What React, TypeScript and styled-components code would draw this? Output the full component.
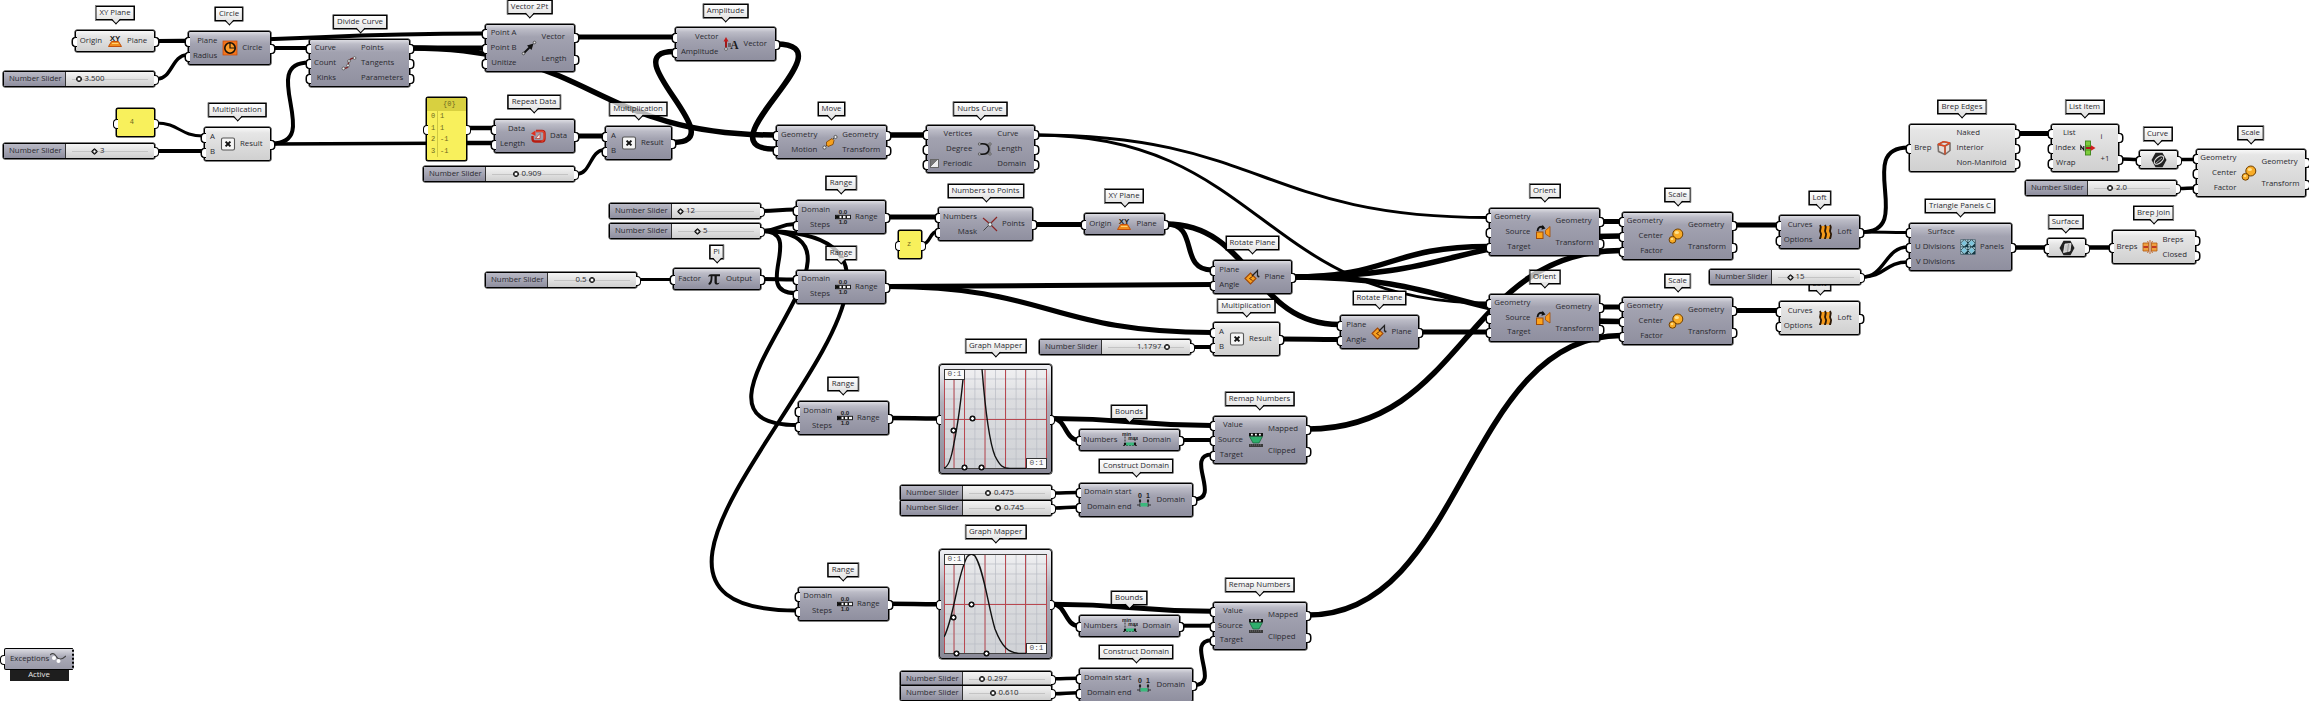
import React from 'react';
import styled, { createGlobalStyle } from 'styled-components';

interface NodeData {
  x: number;
  y: number;
  w: number;
  h: number;
  icon: string;
  split: number;
  ins: string[];
  outs: string[];
  light?: boolean;
}

interface TagData {
  x: number;
  y: number;
  text: string;
  ghost?: boolean;
}

interface SliderData {
  x: number;
  y: number;
  knob: number;
  value: string;
  whole?: boolean;
  flip?: boolean;
}

interface WireData {
  from: [number, number];
  to: [number, number];
  w: number;
  bend?: number;
}

const GROUP = 185.7;

// split is the distance from the left side of the node to the end of its input names
const nodes: NodeData[] = [
  { x: 75, y: 30, w: 80, h: 22, icon: 'xy', split: 27, ins: ['Origin'], outs: ['Plane'], light: true },
  { x: 188, y: 31, w: 83, h: 34, icon: 'circle', split: 29.3, ins: ['Plane', 'Radius'], outs: ['Circle'] },
  { x: 204, y: 127, w: 67, h: 34, icon: 'times', split: 11, ins: ['A', 'B'], outs: ['Result'], light: true },
  { x: 309, y: 39, w: 101, h: 48, icon: 'divide', split: 27, ins: ['Curve', 'Count', 'Kinks'], outs: ['Points', 'Tangents', 'Parameters'] },
  { x: 485, y: 24, w: 90, h: 48, icon: 'vector', split: 31.5, ins: ['Point A', 'Point B', 'Unitize'], outs: ['Vector', 'Length'] },
  { x: 494, y: 119, w: 81, h: 34, icon: 'repeat', split: 31, ins: ['Data', 'Length'], outs: ['Data'] },
  { x: 605, y: 126, w: 67, h: 34, icon: 'times', split: 11, ins: ['A', 'B'], outs: ['Result'] },
  { x: 675, y: 27, w: 101, h: 34, icon: 'amplitude', split: 43.5, ins: ['Vector', 'Amplitude'], outs: ['Vector'] },
  { x: 776, y: 125, w: 111, h: 34, icon: 'move', split: 41.3, ins: ['Geometry', 'Motion'], outs: ['Geometry', 'Transform'] },
  { x: 926, y: 125, w: 109, h: 48, icon: 'nurbs', split: 46.3, ins: ['Vertices', 'Degree', 'Periodic'], outs: ['Curve', 'Length', 'Domain'] },
  { x: 796, y: 200, w: 90, h: 34, icon: 'range', split: 34, ins: ['Domain', 'Steps'], outs: ['Range'] },
  { x: 796, y: 269.5, w: 90, h: 34, icon: 'range', split: 34, ins: ['Domain', 'Steps'], outs: ['Range'] },
  { x: 938, y: 207, w: 95, h: 34, icon: 'points', split: 39, ins: ['Numbers', 'Mask'], outs: ['Points'] },
  { x: 673, y: 268, w: 88, h: 22, icon: 'pi', split: 28, ins: ['Factor'], outs: ['Output'] },
  { x: 1084, y: 213, w: 81, h: 22, icon: 'xy', split: 27.5, ins: ['Origin'], outs: ['Plane'] },
  { x: 1213, y: 260, w: 79, h: 34, icon: 'rotate', split: 26.5, ins: ['Plane', 'Angle'], outs: ['Plane'] },
  { x: 1213, y: 322, w: 67, h: 34, icon: 'times', split: 11, ins: ['A', 'B'], outs: ['Result'], light: true },
  { x: 1340, y: 315, w: 79, h: 34, icon: 'rotate', split: 26.5, ins: ['Plane', 'Angle'], outs: ['Plane'] },
  { x: 1489, y: 208, w: 111, h: 48, icon: 'orient', split: 41.5, ins: ['Geometry', 'Source', 'Target'], outs: ['Geometry', 'Transform'] },
  { x: 1489, y: 293.5, w: 111, h: 48, icon: 'orient', split: 41.5, ins: ['Geometry', 'Source', 'Target'], outs: ['Geometry', 'Transform'] },
  { x: 1622, y: 212, w: 111, h: 48, icon: 'scale', split: 41, ins: ['Geometry', 'Center', 'Factor'], outs: ['Geometry', 'Transform'] },
  { x: 1622, y: 297, w: 111, h: 48, icon: 'scale', split: 41, ins: ['Geometry', 'Center', 'Factor'], outs: ['Geometry', 'Transform'] },
  { x: 1779, y: 215, w: 81, h: 34, icon: 'loft', split: 33.5, ins: ['Curves', 'Options'], outs: ['Loft'] },
  { x: 1779, y: 301, w: 81, h: 34, icon: 'loft', split: 33.5, ins: ['Curves', 'Options'], outs: ['Loft'], light: true },
  { x: 1909, y: 124, w: 107, h: 48, icon: 'edges', split: 22.5, ins: ['Brep'], outs: ['Naked', 'Interior', 'Non-Manifold'], light: true },
  { x: 2051, y: 124, w: 68, h: 48, icon: 'item', split: 24.5, ins: ['List', 'Index', 'Wrap'], outs: ['i', '+1'], light: true },
  { x: 2196, y: 149, w: 110, h: 48, icon: 'scale', split: 40.5, ins: ['Geometry', 'Center', 'Factor'], outs: ['Geometry', 'Transform'], light: true },
  { x: 1909, y: 223, w: 103, h: 48, icon: 'panels', split: 46, ins: ['Surface', 'U Divisions', 'V Divisions'], outs: ['Panels'] },
  { x: 2112, y: 230, w: 84, h: 34, icon: 'join', split: 25.5, ins: ['Breps'], outs: ['Breps', 'Closed'], light: true },
];

const mapperNodes: NodeData[] = [
  { x: 798, y: 401, w: 91, h: 34, icon: 'range', split: 34, ins: ['Domain', 'Steps'], outs: ['Range'] },
  { x: 1079, y: 429, w: 101, h: 22, icon: 'bounds', split: 38.5, ins: ['Numbers'], outs: ['Domain'] },
  { x: 1079, y: 482.5, w: 114, h: 34, icon: 'domain', split: 52.5, ins: ['Domain start', 'Domain end'], outs: ['Domain'] },
  { x: 1213, y: 416, w: 94, h: 48, icon: 'remap', split: 30, ins: ['Value', 'Source', 'Target'], outs: ['Mapped', 'Clipped'] },
];

const tags: TagData[] = [
  { x: 115, y: 6, text: 'XY Plane' },
  { x: 229, y: 7, text: 'Circle' },
  { x: 237, y: 103, text: 'Multiplication' },
  { x: 360, y: 15, text: 'Divide Curve' },
  { x: 529.5, y: 0, text: 'Vector 2Pt' },
  { x: 534, y: 95, text: 'Repeat Data' },
  { x: 638, y: 102, text: 'Multiplication', ghost: true },
  { x: 725.5, y: 4, text: 'Amplitude' },
  { x: 831.5, y: 102, text: 'Move' },
  { x: 980, y: 102, text: 'Nurbs Curve' },
  { x: 841, y: 176, text: 'Range' },
  { x: 841, y: 246, text: 'Range', ghost: true },
  { x: 985.5, y: 184, text: 'Numbers to Points' },
  { x: 716.5, y: 245, text: 'Pi' },
  { x: 1124, y: 189, text: 'XY Plane' },
  { x: 1252.5, y: 236, text: 'Rotate Plane' },
  { x: 1246, y: 299, text: 'Multiplication' },
  { x: 1379.5, y: 291, text: 'Rotate Plane' },
  { x: 1544.5, y: 184, text: 'Orient' },
  { x: 1544.5, y: 270, text: 'Orient', ghost: true },
  { x: 1677.5, y: 188, text: 'Scale' },
  { x: 1677.5, y: 274, text: 'Scale' },
  { x: 1819.5, y: 191, text: 'Loft' },
  { x: 1819.5, y: 277, text: 'Loft' },
  { x: 1962, y: 100, text: 'Brep Edges' },
  { x: 2084.5, y: 100, text: 'List Item' },
  { x: 2157.5, y: 127, text: 'Curve' },
  { x: 2250.5, y: 126, text: 'Scale' },
  { x: 1960, y: 199, text: 'Triangle Panels C' },
  { x: 2065.5, y: 215, text: 'Surface' },
  { x: 2153.5, y: 206, text: 'Brep Join' },
];

const mapperTags: TagData[] = [
  { x: 843, y: 377, text: 'Range' },
  { x: 995.5, y: 339, text: 'Graph Mapper' },
  { x: 1129, y: 405, text: 'Bounds' },
  { x: 1136, y: 459, text: 'Construct Domain' },
  { x: 1259.5, y: 392, text: 'Remap Numbers' },
];

const sliders: SliderData[] = [
  { x: 3, y: 71, knob: 9.5, value: '3.500' },
  { x: 3, y: 143, knob: 26, value: '3', whole: true },
  { x: 423, y: 166, knob: 26.5, value: '0.909' },
  { x: 609, y: 203, knob: 6, value: '12', whole: true },
  { x: 609, y: 223, knob: 23, value: '5', whole: true },
  { x: 485, y: 272, knob: 27.5, value: '0.5', flip: true },
  { x: 1039, y: 339, knob: 35, value: '1.1797', flip: true },
  { x: 1709, y: 269, knob: 15.5, value: '15', whole: true },
  { x: 2025, y: 180, knob: 19, value: '2.0' },
  { x: 900, y: 485, knob: 22, value: '0.475' },
  { x: 900, y: 500, knob: 32, value: '0.745' },
  { x: 900, y: 671, knob: 15.5, value: '0.297' },
  { x: 900, y: 685, knob: 26.5, value: '0.610' },
];

const wires: WireData[] = [
  { from: [156, 41], to: [187, 41], w: 4 },
  { from: [156, 41], to: [484, 33.5], w: 4 },
  { from: [157, 79], to: [187, 55], w: 3.5 },
  { from: [272, 48], to: [309, 48], w: 4 },
  { from: [156, 123], to: [203, 136], w: 3 },
  { from: [156, 151], to: [203, 151], w: 4 },
  { from: [272, 143.5], to: [309, 62.5], w: 4, bend: 52 },
  { from: [272, 144], to: [493, 143], w: 3.5 },
  { from: [467, 128], to: [493, 128], w: 4.5 },
  { from: [467, 143], to: [493, 143], w: 4.5 },
  { from: [576, 136], to: [604, 136], w: 5 },
  { from: [577, 174], to: [604, 150], w: 3.5 },
  { from: [673, 142.5], to: [674, 51.5], w: 5.5, bend: 63 },
  { from: [411, 48], to: [484, 48], w: 5 },
  { from: [411, 48], to: [775, 135], w: 5.5 },
  { from: [576, 37], to: [675, 37], w: 5 },
  { from: [776, 44], to: [775, 149], w: 5.5, bend: 78 },
  { from: [888, 135], to: [925, 135], w: 5.5 },
  { from: [1036, 135], to: [1488, 217.5], w: 3 },
  { from: [1036, 135], to: [1488, 303], w: 3 },
  { from: [762, 211], to: [795, 209.5], w: 4 },
  { from: [762, 231], to: [795, 224], w: 4 },
  { from: [762, 231], to: [795, 293], w: 4, bend: 44 },
  { from: [762, 231], to: [797, 425], w: 4, bend: 143 },
  { from: [762, 231], to: [797, 610.5], w: 4, bend: 281 },
  { from: [638, 279.5], to: [672, 279.5], w: 3 },
  { from: [761, 279], to: [795, 279.5], w: 4 },
  { from: [887, 217], to: [937, 217], w: 5 },
  { from: [923, 244], to: [937, 231.5], w: 3.5 },
  { from: [1034, 224.5], to: [1083, 224.5], w: 5 },
  { from: [887, 286.5], to: [1212, 284.5], w: 5 },
  { from: [887, 286.5], to: [1212, 332.5], w: 5 },
  { from: [1166, 224], to: [1212, 270], w: 5, bend: 34 },
  { from: [1166, 224], to: [1339, 324.5], w: 5.5 },
  { from: [1192, 347], to: [1212, 347], w: 4 },
  { from: [1281, 339], to: [1339, 339.5], w: 5 },
  { from: [1293, 277], to: [1488, 246.5], w: 5.5 },
  { from: [1293, 277], to: [1621, 236], w: 5.5 },
  { from: [1293, 277], to: [1621, 321.5], w: 5.5 },
  { from: [1420, 332], to: [1488, 332], w: 5 },
  { from: [1601, 221.5], to: [1621, 221.5], w: 5 },
  { from: [1601, 307], to: [1621, 307], w: 5 },
  { from: [1308, 429], to: [1621, 250.5], w: 5.5 },
  { from: [1308, 615], to: [1621, 335.5], w: 5.5 },
  { from: [1734, 225], to: [1778, 225], w: 5 },
  { from: [1734, 310.5], to: [1778, 310.5], w: 5 },
  { from: [1862, 232], to: [1908, 147.5], w: 4, bend: 54 },
  { from: [1862, 232], to: [1908, 232.5], w: 3 },
  { from: [1862, 277], to: [1908, 247], w: 3.5 },
  { from: [1862, 277], to: [1908, 262], w: 3.5 },
  { from: [2017, 133.5], to: [2050, 133.5], w: 5 },
  { from: [2121, 159], to: [2138, 159.5], w: 3.5 },
  { from: [2178, 159.5], to: [2195, 159.5], w: 3.5 },
  { from: [2179, 188.5], to: [2195, 188], w: 3.5 },
  { from: [2013, 247.5], to: [2046, 247.5], w: 4.5 },
  { from: [2087, 247.5], to: [2111, 247.5], w: 4.5 },
];

const mapperWires: WireData[] = [
  { from: [890, 418], to: [938, 418.5], w: 4.5 },
  { from: [1053, 418.5], to: [1078, 440], w: 4.5 },
  { from: [1053, 418.5], to: [1212, 425.5], w: 5 },
  { from: [1181, 440], to: [1212, 440], w: 4 },
  { from: [1194, 499.5], to: [1212, 454.5], w: 4, bend: 28 },
  { from: [1054, 493], to: [1078, 492.5], w: 3.5 },
  { from: [1054, 508], to: [1078, 507], w: 3.5 },
];

const wirePath = ({ from, to, bend }: WireData) => {
  const d = bend ?? (to[0] - from[0]) / 2;
  return `M${from[0]} ${from[1]} C${from[0] + d} ${from[1]} ${to[0] - d} ${to[1]} ${to[0]} ${to[1]}`;
};

const glyph = { fontFamily: 'Liberation Sans', fontWeight: 700, fill: '#1c1c1c' };

const icons: Record<string, React.ReactNode> = {
  xy: (
    <>
      <path d="M4.5 8.5h7l3 5h-13z" fill="#f08c1c" stroke="#c0500c" />
      <path d="M5 10.5h6.5" stroke="#ffd070" />
      <text x="8" y="7.5" fontSize="8" textAnchor="middle" {...glyph}>XY</text>
    </>
  ),
  circle: (
    <>
      <rect x="1" y="1" width="14" height="14" fill="#f2741c" stroke="#c84808" strokeWidth=".7" />
      <circle cx="8" cy="8" r="5.2" fill="#ff9c28" stroke="#1a1208" strokeWidth="1.6" />
      <path d="M8 3v5h5" fill="none" stroke="#1a1208" strokeWidth="1.2" />
    </>
  ),
  times: (
    <>
      <rect x="1.5" y="2" width="13" height="12" rx="1.5" fill="#f6f6f6" stroke="#555" strokeWidth="1.1" />
      <path d="M5.6 5.6l4.8 4.8M10.4 5.6l-4.8 4.8" stroke="#111" strokeWidth="2" />
    </>
  ),
  divide: (
    <>
      <path d="M3 13.5c7-.5 3-5 5-8 1.5-2 3-2.5 5.500-2.500" fill="none" stroke="#802020" strokeWidth="1.3" />
      {[[2.5, 13.5], [7, 10.5], [8, 6], [13.5, 3]].map(([x, y]) => (
        <circle key={x} cx={x} cy={y} r="1.4" fill="#eee" stroke="#444" strokeWidth=".7" />
      ))}
    </>
  ),
  vector: (
    <>
      <path d="M3 13l6-6" stroke="#111" strokeWidth="1.8" />
      <path d="M12.5 3.5l-2 6.5L6 5.500z" fill="#111" />
      <circle cx="2.5" cy="13.5" r="1.3" fill="#ddd" stroke="#333" strokeWidth=".7" />
      <circle cx="13.500" cy="2.5" r="1.3" fill="#ddd" stroke="#333" strokeWidth=".7" />
    </>
  ),
  repeat: (
    <>
      <path d="M6 3h6c2 0 2.5 1 2.5 2.5v5c0 2-1 3-3 3h-6c-2 0-3-1-3-3V8" fill="none" stroke="#b81c10" strokeWidth="2.4" />
      <path d="M6 3.2h6c1.5 0 2 .5 2 2v5c0 2-1 3-2.5 3" fill="none" stroke="#ff6a50" strokeWidth=".8" />
      <path d="M1 5.5l4.5-3V8z" fill="#e03020" />
      <path d="M10 5.5v5H5.5z" fill="#fbe8e4" stroke="#b81c10" strokeWidth=".6" />
    </>
  ),
  amplitude: (
    <>
      <path d="M3 13V4" stroke="#a01818" strokeWidth="2" />
      <path d="M3 1l2.5 4.5h-5z" fill="#c01c1c" />
      <circle cx="3" cy="13" r="1.4" fill="#eee" stroke="#444" strokeWidth=".7" />
      <path d="M5 8h3M5 10h3" stroke="#222" strokeWidth=".9" />
      <text x="11.5" y="13" fontSize="11.5" textAnchor="middle" {...glyph} fontFamily="Liberation Serif">A</text>
    </>
  ),
  move: (
    <>
      <path d="M2 14L13.5 2.5" stroke="#444" />
      <path d="M4.500 8L10 4.500l2 2-1 4L6 12.500l-1.500-1.500z" fill="#f6a01c" stroke="#7a4000" strokeWidth=".8" />
      <circle cx="2.5" cy="13.5" r="1.6" fill="#eee" stroke="#444" strokeWidth=".8" />
      <circle cx="13.5" cy="3" r="1.6" fill="#eee" stroke="#444" strokeWidth=".8" />
    </>
  ),
  nurbs: (
    <>
      <path d="M3 3h10v10H3" fill="none" stroke="#666" strokeWidth=".6" />
      <path d="M2.5 3C9 2 12 4.5 12 8s-3 6-9.5 5" fill="none" stroke="#111" strokeWidth="1.7" />
      {[[2.5, 3], [13, 3], [2.5, 13], [13, 13]].map(([x, y]) => (
        <circle key={`${x}-${y}`} cx={x} cy={y} r="1.2" fill="#bbb" stroke="#444" strokeWidth=".7" />
      ))}
    </>
  ),
  range: (
    <>
      <rect x=".5" y="6.3" width="15" height="3.4" fill="#f4f4f4" stroke="#111" strokeWidth=".9" />
      <path d="M.5 6.500h4v3h-4zM6.500 6.500H8v3H6.500zM10.500 6.500H12v3h-1.500z" fill="#111" />
      <text x="8" y="5.4" fontSize="6.2" textAnchor="middle" {...glyph}>0.0</text>
      <text x="8" y="15.2" fontSize="6.2" textAnchor="middle" {...glyph}>1.0</text>
    </>
  ),
  points: (
    <>
      <path d="M1 2l7 6M15 1L8 8M15 15L8 8" stroke="#8a2424" strokeWidth="1.2" />
      <path d="M1.500 14.500l6-6" stroke="#444" />
      <circle cx="8" cy="8.5" r="1.9" fill="#f2f2f2" stroke="#444" strokeWidth=".8" />
    </>
  ),
  pi: (
    <path d="M2 6c.5-2 1.5-2.700 3-2.700h9v2h-3.200v6c0 1.200 1.200 1.200 2.700.2-.3 2.500-5 3-5-.3V5.300h-2c0 4-.5 8-3 8.500-1.500 0-1.300-1.500-.3-2.200 1.200-1 1.400-3 1.500-6.300C3.500 5.300 3 5.300 2 6z" fill="#151515" />
  ),
  rotate: (
    <>
      <path d="M1 9.500L6.500 4 12 9.500 6.500 15z" fill="#f6a020" stroke="#a04808" strokeWidth="1.1" />
      <path d="M8.500 7.500l-3 2 3 2" fill="none" stroke="#703000" />
      <path d="M8 7l5.500-5.500v6" fill="none" stroke="#222" strokeWidth="1.200" />
      <circle cx="14.500" cy="7.5" r="1" fill="#222" />
    </>
  ),
  orient: (
    <>
      <path d="M2.500 7C3 3 5.500 2 8.500 3.500" fill="none" stroke="#111" strokeWidth="1.9" />
      <path d="M7.500.8l3 3.700-4 1.300z" fill="#111" />
      <rect x="1.500" y="8" width="6.5" height="6.5" fill="#fca41c" stroke="#a04c08" />
      <path d="M10.500 6.500L15 2.500V13l-4.500-3z" fill="#f89a1c" stroke="#a04c08" strokeWidth=".8" />
    </>
  ),
  scale: (
    <>
      <circle cx="9.8" cy="6" r="5" fill="#f8ac28" stroke="#704000" />
      <circle cx="4.5" cy="11.8" r="3.4" fill="#f8ac28" stroke="#704000" />
      <ellipse cx="8.8" cy="4.5" rx="2.2" ry="1.5" fill="#ffe08c" />
      <ellipse cx="4" cy="11" rx="1.3" ry=".9" fill="#ffe08c" />
    </>
  ),
  loft: (
    <>
      <path d="M3 1.500C5 5 1.500 6 3 8.500s0 4 0 6h10c0-2 2-3.500 0-6s1-4 0-7c-2 .8-3 .8-5 0-2 .8-3 .8-5 0z" fill="#f49a1c" />
      <path d="M3 1c2.500 3.500-1.500 5 .5 7.500S3 12.500 3 15M8 1c2.500 3.500-1.500 5 .5 7.500S8 12.500 8 15M13 1c2.500 3.500-1.500 5 .5 7.500s-.5 4-.5 6.500" fill="none" stroke="#2a1808" strokeWidth="1.9" />
    </>
  ),
  edges: (
    <>
      <path d="M2 4.500L9 6v8.500l-6.500-3zM9 6l5-3v7.500l-5 4zM2 4.500l5.500-2.800L14 3 9 6z" fill="#e4dcd8" stroke="#77706c" strokeWidth="1.600" strokeLinejoin="round" />
      <path d="M2 4.500L9 6v8.500M9 6l5-3M2 4.500l5.500-2.800L14 3" fill="none" stroke="#e04820" strokeWidth="1.3" strokeLinejoin="round" />
    </>
  ),
  item: (
    <>
      <rect x="5.500" y="1" width="5" height="14" fill="#7ccc3c" stroke="#3c8418" strokeWidth=".9" />
      <path d="M6 6h4M6 10h4" stroke="#3c8418" strokeWidth=".8" />
      <path d="M.8 10V6l3 4V6" fill="none" stroke="#111" strokeWidth="1.1" />
      <path d="M6 8h6" stroke="#b01818" strokeWidth="2" />
      <path d="M11 5.200L15.500 8 11 10.800z" fill="#d02020" />
    </>
  ),
  panels: (
    <>
      <rect x=".5" y=".5" width="15" height="15" fill="#123844" />
      {[1.2, 8.6].map((x) => [1.2, 8.6].map((y) => (
        <path key={`${x}-${y}`} d={`M${x} ${y + 3}l3-3 3 3-3 3zM${x} ${y}h1.5l-1.5 1.5zM${x + 6} ${y}v1.5l-1.5-1.5zM${x} ${y + 6}v-1.5l1.5 1.5z`} fill="#7cc4dc" stroke="#e4f6fa" strokeWidth=".5" />
      )))}
    </>
  ),
  join: (
    <>
      <path d="M1 4h5.500v8H1zM9.500 4H15v8H9.500z" fill="#f0a040" stroke="#b05810" strokeWidth=".8" />
      <path d="M1.500 8H6M14.500 8H10" stroke="#b01818" strokeWidth="1.6" />
      <path d="M8 1v14M5.500 2l1 2M10.500 2l-1 2M5.500 14l1-2M10.500 14l-1-2" stroke="#c06020" strokeWidth=".9" />
    </>
  ),
  bounds: (
    <>
      <path d="M3 4.500v9M13 7v6.500M1 13.500h14" stroke="#333" strokeDasharray="2 1" />
      <rect x="4" y="10.500" width="8" height="3" fill="#3ab87c" />
      <circle cx="3" cy="12" r="1.2" fill="#111" />
      <circle cx="13" cy="12" r="1.2" fill="#111" />
      <text x="4.500" y="3.8" fontSize="5" textAnchor="middle" {...glyph}>min</text>
      <text x="11.200" y="7.6" fontSize="5" textAnchor="middle" {...glyph}>max</text>
    </>
  ),
  domain: (
    <>
      <path d="M4 7v8M12 7v8M1 13h3M12 13h3" stroke="#222" strokeWidth=".9" />
      <rect x="4.500" y="11" width="7" height="3.5" fill="#3ab87c" />
      <circle cx="4" cy="9" r="1.2" fill="#222" />
      <circle cx="12" cy="9" r="1.2" fill="#222" />
      <text x="4" y="6" fontSize="7" textAnchor="middle" {...glyph}>0</text>
      <text x="12" y="6" fontSize="7" textAnchor="middle" {...glyph}>1</text>
    </>
  ),
  remap: (
    <>
      <path d="M1.500 4.500h13L11 11H5z" fill="#2fae6c" stroke="#145c34" strokeWidth=".7" />
      <rect x="1" y="1" width="14" height="3.2" fill="#111" />
      <path d="M3 1.800h1.800v1.800H3zM7 1.800h1.800v1.800H7zM11 1.800h1.800v1.800H11z" fill="#fff" />
      <rect x="1" y="12" width="14" height="3" fill="#3a3a3a" />
      <path d="M2 13h12" stroke="#999" strokeWidth=".6" strokeDasharray="1 1" />
    </>
  ),
  curve: (
    <>
      <path d="M4.500.8h7L15.500 8l-4 7.200h-7L.5 8z" fill="#222" />
      <ellipse cx="8" cy="8" rx="5.5" ry="3" transform="rotate(-40 8 8)" fill="none" stroke="#ddd" strokeWidth="1.2" />
      <path d="M5 11l6-5" stroke="#aaa" strokeWidth=".9" />
    </>
  ),
  surface: (
    <>
      <path d="M4.500.8h7L15.500 8l-4 7.200h-7L.5 8z" fill="#222" />
      <path d="M6 4l6-.5-1 7.500-6.500 1.500z" fill="#c8c8c8" stroke="#fff" strokeWidth=".7" />
      <path d="M9.500 4l-1 8" stroke="#777" strokeWidth=".6" />
    </>
  ),
  exceptions: (
    <>
      <path d="M0 4c2-2 4-2 6 1M6 5c2 4 6 4 10 0" fill="none" stroke="#444" strokeWidth="1.1" />
      <circle cx="4" cy="7" r="2" fill="#fff" />
      <circle cx="8.500" cy="10" r="2" fill="#fff" />
    </>
  ),
};

const Icon = ({ name }: { name: string }) => (
  <IconSvg viewBox="0 0 16 16">{icons[name]}</IconSvg>
);

const Component = (props: NodeData) => (
  <NodeBox $x={props.x} $y={props.y} $w={props.w} $h={props.h} $light={props.light}>
    <Inputs $w={props.split}>
      {props.ins.map((name) => (
        <InRow key={name}>
          {name === 'Periodic' ? <Toggle /> : null}
          {name}
        </InRow>
      ))}
    </Inputs>
    <IconSlot><Icon name={props.icon} /></IconSlot>
    <Outputs>
      {props.outs.map((name) => (
        <OutRow key={name}>{name}</OutRow>
      ))}
    </Outputs>
  </NodeBox>
);

const Param = ({ x, y, icon }: { x: number; y: number; icon: string }) => (
  <NodeBox $x={x} $y={y} $w={39} $h={19} $light>
    <ParamRow><Icon name={icon} /></ParamRow>
  </NodeBox>
);

const Slider = (props: SliderData) => (
  <SliderBox $x={props.x} $y={props.y}>
    <SliderName>Number Slider</SliderName>
    <Track $offset={props.knob} $flip={props.flip}>
      <Knob $whole={props.whole} />
      {props.value}
    </Track>
  </SliderBox>
);

const mapperLines = [10, 20.5, 41, 61.5, 81.5];
const gridLines = [10, 20, 30, 40, 50, 60, 70, 80, 90];

const Mapper = ({ y, curve, grips }: { y: number; curve: string; grips: number[][] }) => (
  <MapperBox $x={939} $y={y}>
    <Plot viewBox="0 0 103 100">
      {gridLines.map((v) => (
        <path key={v} d={`M${v * 1.03} 0v100M0 ${v}h103`} stroke="#b9bcc4" strokeWidth=".7" />
      ))}
      {mapperLines.map((v) => (
        <path key={v} d={`M${v} 0v100`} stroke="#b84850" />
      ))}
      <path d="M0 50.5h103M.5 0v100M102.5 0v100" stroke="#b84850" />
      <path d="M0 .5h103M0 99.5h103" stroke="#444" />
      <path d={curve} fill="none" stroke="#111" strokeWidth="1.4" />
    </Plot>
    <Bound $top>0:1</Bound>
    <Bound>0:1</Bound>
    {grips.map(([gx, gy]) => (
      <Grip key={`${gx}-${gy}`} $x={gx} $y={gy} />
    ))}
  </MapperBox>
);

const App = () => (
  <Canvas>
    <GlobalStyle />
    <Wires viewBox="0 0 2309 701">
      {wires.map((wire, i) => (
        <path key={i} d={wirePath(wire)} strokeWidth={wire.w} />
      ))}
      {[0, GROUP].map((dy) => (
        <g key={dy} transform={`translate(0 ${dy})`}>
          {mapperWires.map((wire, i) => (
            <path key={i} d={wirePath(wire)} strokeWidth={wire.w} />
          ))}
        </g>
      ))}
    </Wires>

    {[...tags, ...mapperTags, ...mapperTags.map((t) => ({ ...t, y: t.y + GROUP }))].map((tag) => (
      <Tag key={`${tag.x}-${tag.y}`} $x={tag.x} $y={tag.y} $ghost={tag.ghost}>{tag.text}</Tag>
    ))}

    {[...nodes, ...mapperNodes, ...mapperNodes.map((n) => ({ ...n, y: n.y + GROUP }))].map((node) => (
      <Component key={`${node.x}-${node.y}`} {...node} />
    ))}
    <Param x={2139} y={150} icon="curve" />
    <Param x={2047} y={238} icon="surface" />

    {sliders.map((slider) => (
      <Slider key={`${slider.x}-${slider.y}`} {...slider} />
    ))}

    <Note $x={116} $y={108} $w={39} $h={29}>4</Note>
    <Note $x={898} $y={230} $w={24} $h={29}>z</Note>
    <ListNote $x={426} $y={97} $w={41} $h={64}>
      <ListHead>{'{0}'}</ListHead>
      {['1', '1', '-1', '-1'].map((value, i) => (
        <ListRow key={i}>
          <ListIndex>{i}</ListIndex>
          {value}
        </ListRow>
      ))}
    </ListNote>

    <Mapper
      y={363.5}
      curve="M0 99C5 98 8 86 10 74C15 50 18 22 20 0M38 0C42 50 46 75 51 87C56 97 59 99.5 66 99.5H103"
      grips={[[28.5, 50.5], [9.5, 62.5], [20, 99.5], [37.5, 99.5]]}
    />
    <Mapper
      y={363.5 + GROUP}
      curve="M0 83C10 64 13 22 23 3Q27-2 31 2C40 16 44 52 51 75C58 93 64 99.5 78 99.5H103"
      grips={[[27, 50.5], [9.5, 64], [12.5, 100], [42, 100]]}
    />

    <Cluster>
      <ClusterBody>
        Exceptions
        <Icon name="exceptions" />
      </ClusterBody>
      <ClusterState>Active</ClusterState>
    </Cluster>
  </Canvas>
);

export default App;

interface BoxProps {
  $x: number;
  $y: number;
  $w?: number;
  $h?: number;
}

const GlobalStyle = createGlobalStyle`
  body {
    margin: 0;
    background: #fff;
  }

  * {
    box-sizing: border-box;
  }
`;

const Canvas = styled.div`
  position: relative;
  width: 2309px;
  height: 701px;
  overflow: hidden;
  background: #fff;
  color: #2a2a30;
  font-family: 'Open Sans', 'Noto Sans', sans-serif;
  font-size: 7.8px;
  line-height: 1;
  white-space: nowrap;
`;

const Wires = styled.svg`
  display: block;
  width: 2309px;
  height: 701px;
  fill: none;
  stroke: #000;
`;

const Tag = styled.div<BoxProps & { $ghost?: boolean }>`
  position: absolute;
  left: ${(p) => p.$x}px;
  top: ${(p) => p.$y}px;
  height: 14px;
  padding: 2px 3px 0;
  transform: translateX(-50%);
  border: 1px solid #000;
  box-shadow: 0 0 0 0.5px #000;
  background: ${(p) => (p.$ghost ? 'rgba(240, 240, 240, 0.75)' : 'linear-gradient(#fff, #e6e6e6)')};

  &::after {
    content: '';
    position: absolute;
    left: 50%;
    bottom: -4px;
    width: 6px;
    height: 6px;
    margin-left: -3px;
    transform: rotate(45deg);
    border: solid #000;
    border-width: 0 1px 1px 0;
    background: linear-gradient(135deg, transparent 40%, #e6e6e6 40%);
  }
`;

const NodeBox = styled.div<BoxProps & { $light?: boolean }>`
  position: absolute;
  left: ${(p) => p.$x}px;
  top: ${(p) => p.$y}px;
  display: flex;
  width: ${(p) => p.$w}px;
  height: ${(p) => p.$h}px;
  padding: 1px 0;
  border: 1px solid #000;
  border-radius: 2px;
  box-shadow: 0 0 0 0.5px #000;
  background: ${(p) => (p.$light
    ? 'linear-gradient(#f8f8f8 0, #e6e6e6 5px, #d0d0d0 100%)'
    : 'linear-gradient(#dcdce2 0, #bcbcc7 4px, #a2a2b0 12px, #8f8f9f 100%)')};
`;

const Inputs = styled.div<{ $w: number }>`
  display: flex;
  flex-direction: column;
  flex: none;
  width: ${(p) => p.$w - 1}px;
`;

const Outputs = styled.div`
  display: flex;
  flex-direction: column;
  flex: 1;
`;

const Row = styled.div`
  position: relative;
  display: flex;
  flex: 1;
  align-items: center;

  &::before {
    content: '';
    position: absolute;
    top: calc(50% - 4px);
    width: 4px;
    height: 8px;
    border: 1px solid #000;
    background: #fff;
  }
`;

const InRow = styled(Row)`
  justify-content: flex-end;

  &::before {
    left: -4.5px;
    border-right: 0;
    border-radius: 4px 0 0 4px;
    box-shadow: -0.5px 0 0 #000;
  }
`;

const OutRow = styled(Row)`
  &::before {
    right: -4.5px;
    border-left: 0;
    border-radius: 0 4px 4px 0;
    box-shadow: 0.5px 0 0 #000;
  }
`;

const Toggle = styled.span`
  width: 9px;
  height: 9px;
  margin-right: auto;
  margin-left: 3px;
  border: 1px solid #666;
  background: linear-gradient(135deg, #777 50%, #eee 50%);
`;

const IconSlot = styled.div`
  display: flex;
  flex: none;
  align-items: center;
  justify-content: center;
  width: 25px;
`;

const IconSvg = styled.svg`
  display: block;
  flex: none;
  width: 16px;
  height: 16px;
`;

const ParamRow = styled(InRow)`
  justify-content: center;

  &::after {
    content: '';
    position: absolute;
    top: calc(50% - 4px);
    right: -4.5px;
    width: 4px;
    height: 8px;
    border: 1px solid #000;
    border-left: 0;
    border-radius: 0 4px 4px 0;
    background: #fff;
  }
`;

const SliderBox = styled.div<BoxProps>`
  position: absolute;
  left: ${(p) => p.$x}px;
  top: ${(p) => p.$y}px;
  display: flex;
  width: 152px;
  height: 16px;
  border: 1px solid #000;
  border-radius: 2px;
  box-shadow: 0 0 0 0.5px #000;
  background: linear-gradient(#f4f4f4, #cfcfcf);

  &::after {
    content: '';
    position: absolute;
    top: 3px;
    right: -4.5px;
    width: 4px;
    height: 8px;
    border: 1px solid #000;
    border-left: 0;
    border-radius: 0 4px 4px 0;
    background: #fff;
  }
`;

const SliderName = styled.div`
  display: flex;
  flex: none;
  align-items: center;
  width: 62px;
  padding-left: 5px;
  border-right: 1px solid #333;
  background: linear-gradient(#babac6, #8e8e9e);
`;

const Track = styled.div<{ $offset: number; $flip?: boolean }>`
  display: flex;
  flex: 1;
  flex-direction: ${(p) => (p.$flip ? 'row-reverse' : 'row')};
  justify-content: ${(p) => (p.$flip ? 'flex-end' : 'flex-start')};
  align-items: center;
  gap: 3px;
  padding-left: ${(p) => p.$offset}px;
  background: linear-gradient(#c4c4c4, #c4c4c4) center / 76px 1px no-repeat;
`;

const Knob = styled.span<{ $whole?: boolean }>`
  flex: none;
  width: ${(p) => (p.$whole ? 5 : 6)}px;
  height: ${(p) => (p.$whole ? 5 : 6)}px;
  transform: ${(p) => (p.$whole ? 'rotate(45deg)' : 'none')};
  border: 1px solid #000;
  box-shadow: inset 0 0 0 0.5px #000;
  border-radius: ${(p) => (p.$whole ? '1px' : '50%')};
  background: #fff;
`;

const Note = styled.div<BoxProps>`
  position: absolute;
  left: ${(p) => p.$x}px;
  top: ${(p) => p.$y}px;
  display: flex;
  align-items: center;
  width: ${(p) => p.$w}px;
  height: ${(p) => p.$h}px;
  padding-left: ${(p) => (p.$w ?? 0) * 0.33}px;
  border: 1px solid #000;
  border-radius: 2px;
  box-shadow: 0 0 0 0.5px #000;
  background: #f8f05c;
  color: #6e6820;
  font-family: 'Liberation Mono', monospace;
  font-size: 7px;

  &::before,
  &::after {
    content: '';
    position: absolute;
    top: calc(50% - 4px);
    width: 4px;
    height: 8px;
    border: 1px solid #000;
    background: #fff;
  }

  &::before {
    left: -4.5px;
    border-right: 0;
    border-radius: 4px 0 0 4px;
  }

  &::after {
    right: -4.5px;
    border-left: 0;
    border-radius: 0 4px 4px 0;
  }
`;

const ListNote = styled(Note)`
  flex-direction: column;
  align-items: stretch;
  padding: 0 0 3px;
`;

const ListHead = styled.div`
  height: 13px;
  padding: 3px 0 0 16px;
  background: #d8d040;
`;

const ListRow = styled.div`
  display: flex;
  flex: 1;
  align-items: center;
`;

const ListIndex = styled.span`
  display: flex;
  align-items: center;
  width: 11px;
  height: 100%;
  margin-right: 2px;
  padding-left: 4px;
  border-right: 1px solid #d0c840;
`;

const MapperBox = styled.div<BoxProps>`
  position: absolute;
  left: ${(p) => p.$x}px;
  top: ${(p) => p.$y}px;
  width: 113px;
  height: 110px;
  padding: 4px;
  border: 1px solid #000;
  border-radius: 3px;
  box-shadow: 0 0 0 0.5px #000;
  background: linear-gradient(#f0f0f4, #b0b0ba 35%, #8a8a98);

  &::before,
  &::after {
    content: '';
    position: absolute;
    top: 50px;
    width: 4px;
    height: 8px;
    border: 1px solid #000;
    background: #fff;
  }

  &::before {
    left: -4px;
    border-right: 0;
    border-radius: 4px 0 0 4px;
  }

  &::after {
    right: -4px;
    border-left: 0;
    border-radius: 0 4px 4px 0;
  }
`;

const Plot = styled.svg`
  display: block;
  width: 103px;
  height: 100px;
  background: linear-gradient(#f0f0f2, #dcdde0 30%, #d0d2d6);
`;

const Bound = styled.div<{ $top?: boolean }>`
  position: absolute;
  ${(p) => (p.$top ? 'left: 4px; top: 4px;' : 'right: 4px; bottom: 4px;')}
  width: 21px;
  height: 11px;
  padding-top: 1px;
  border: 1px solid #333;
  background: #fafafa;
  color: #555;
  font-family: 'Liberation Mono', monospace;
  font-size: 7.8px;
  text-align: center;
`;

const Grip = styled.span<BoxProps>`
  position: absolute;
  left: ${(p) => p.$x + 1.5}px;
  top: ${(p) => p.$y + 1}px;
  width: 5px;
  height: 5px;
  border: 1px solid #000;
  box-shadow: 0 0 0 0.5px #000;
  border-radius: 50%;
  background: #fff;
`;

const Cluster = styled.div`
  position: absolute;
  left: 4px;
  top: 648px;
  display: flex;
  flex-direction: column;
  align-items: center;
  width: 70px;

  &::before {
    content: '';
    position: absolute;
    left: -4px;
    top: 7px;
    width: 4px;
    height: 8px;
    border: 1px solid #000;
    border-right: 0;
    border-radius: 4px 0 0 4px;
    background: #fff;
  }
`;

const ClusterBody = styled.div`
  display: flex;
  align-items: center;
  justify-content: space-between;
  width: 70px;
  height: 22px;
  padding: 0 6px 0 5px;
  border: 1px solid #000;
  border-right: 2px dotted #000;
  border-radius: 2px;
  background: linear-gradient(#dcdce2, #a9a9b6 40%, #9a9aa8);
`;

const ClusterState = styled.div`
  width: 59px;
  height: 11px;
  padding-top: 1px;
  background: #1e1e1e;
  color: #e8e8e8;
  text-align: center;
`;
